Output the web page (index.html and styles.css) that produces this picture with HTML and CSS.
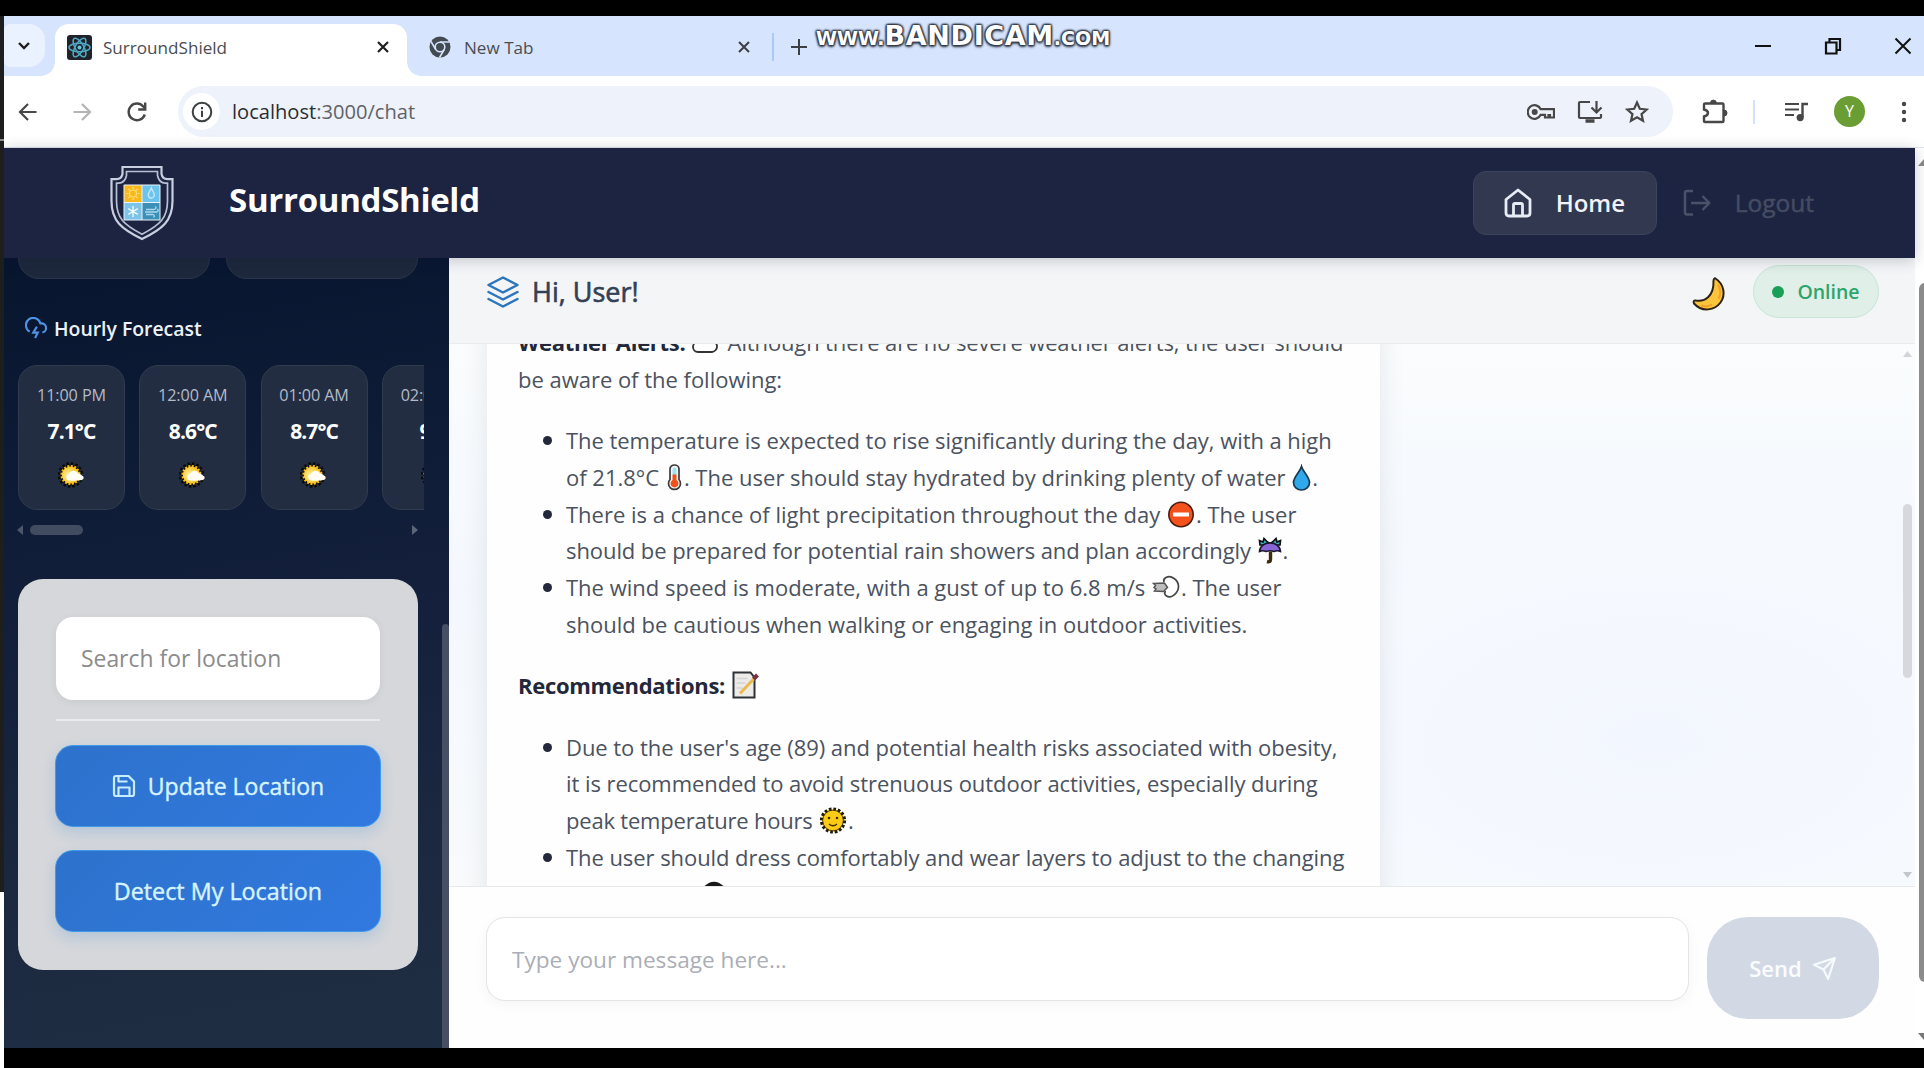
FILE: index.html
```html
<!DOCTYPE html>
<html lang="en">
<head>
<meta charset="utf-8">
<title>SurroundShield</title>
<link rel="stylesheet" href="styles.css">
</head>
<body>
<svg class="defs" width="0" height="0" aria-hidden="true">
  <defs>
    <radialGradient id="sunGlow" cx=".4" cy=".5" r=".6"><stop offset="0" stop-color="#fff3b0"/><stop offset="1" stop-color="#f9bd0c"/></radialGradient>
    <symbol id="sun-cloud" viewBox="0 0 28 26">
      <circle cx="12.5" cy="13" r="10.4" fill="#0b0b0b"/>
      <circle cx="12.5" cy="13" r="11" fill="none" stroke="#0b0b0b" stroke-width="3.6" stroke-dasharray="2.5 1.82"/>
      <circle cx="12.5" cy="13" r="8.9" fill="none" stroke="#f3b90f" stroke-width="2.400" stroke-dasharray="2 1.500"/>
      <circle cx="12.5" cy="13" r="8.6" fill="url(#sunGlow)"/>
      <path d="M11 18.500a3.300 3.300 0 0 1 0-6.500c1-3.200 6-5 9-.8 2 0 2.500 1.600 4 2.200 2.500 1 2 4-.5 4.600-4 1-8 .7-12.500.5z" fill="#fffdf4"/>
    </symbol>
  </defs>
</svg>
<div class="screen">
  <aside class="edge"><i class="edge-line"></i></aside>
  <div class="browser">
    <div class="tabstrip">
      <div class="tab-search"><svg width="14" height="10" viewBox="0 0 14 10"><path d="M2 2l5 5 5-5" fill="none" stroke="#1f1f1f" stroke-width="2.400"/></svg></div>
      <div class="tab tab-active">
        <svg class="favicon" width="25" height="25" viewBox="0 0 25 25"><rect width="25" height="25" rx="3" fill="#20232a"/><g fill="none" stroke="#4fa9c4" stroke-width="1.500"><ellipse cx="12.500" cy="12.500" rx="10.500" ry="4.200"/><ellipse cx="12.500" cy="12.500" rx="10.500" ry="4.200" transform="rotate(60 12.500 12.500)"/><ellipse cx="12.500" cy="12.500" rx="10.500" ry="4.200" transform="rotate(120 12.500 12.500)"/></g><circle cx="12.500" cy="12.500" r="2" fill="#61c5e0"/></svg>
        <span class="tab-title">SurroundShield</span>
        <svg class="tab-close" width="14" height="14" viewBox="0 0 14 14"><path d="M2 2l10 10M12 2L2 12" stroke="#1f1f1f" stroke-width="2.200"/></svg>
      </div>
      <div class="tab tab-idle">
        <svg width="22" height="22" viewBox="0 0 22 22"><circle cx="11" cy="11" r="10.500" fill="#434a52"/><circle cx="11" cy="11" r="5.600" fill="#d6e4fd"/><circle cx="11" cy="11" r="4" fill="#434a52"/><path d="M11 6h9.500M6.700 13.500L2 5.500M15.300 13.500L10.500 21.500" stroke="#d6e4fd" stroke-width="1.500"/></svg>
        <span class="tab-title">New Tab</span>
        <svg class="tab-close" width="14" height="14" viewBox="0 0 14 14"><path d="M2 2l10 10M12 2L2 12" stroke="#3c4043" stroke-width="2"/></svg>
      </div>
      <i class="tab-sep"></i>
      <svg class="new-tab" width="18" height="18" viewBox="0 0 18 18"><path d="M9 1v16M1 9h16" stroke="#3c4043" stroke-width="2"/></svg>
      <div class="window-buttons">
        <svg width="18" height="18" viewBox="0 0 18 18"><path d="M1 9h16" stroke="#111" stroke-width="2"/></svg>
        <svg width="18" height="18" viewBox="0 0 18 18"><path d="M2 5.500h10.500v11H2zM5.500 5V2H16v11h-3" fill="none" stroke="#111" stroke-width="2.200"/></svg>
        <svg width="18" height="18" viewBox="0 0 18 18"><path d="M1.500 1.500l15 15M16.500 1.500l-15 15" stroke="#111" stroke-width="2"/></svg>
      </div>
    </div>
    <div class="toolbar">
      <div class="nav-icons">
        <svg width="20" height="20" viewBox="0 0 20 20"><path d="M18.500 10H2M10 2L2 10l8 8" fill="none" stroke="#474747" stroke-width="2.200"/></svg>
        <svg width="20" height="20" viewBox="0 0 20 20"><path d="M1.500 10H18M10 2l8 8-8 8" fill="none" stroke="#b4b4b4" stroke-width="2.200"/></svg>
        <svg width="22" height="22" viewBox="0 0 22 22"><path d="M18.800 13.500A8.300 8.300 0 1 1 17.500 5.800L19 7.500" fill="none" stroke="#474747" stroke-width="2.400"/><path d="M19.200 1.500v7h-7" fill="none" stroke="#474747" stroke-width="2.400"/></svg>
      </div>
      <div class="omnibox">
        <span class="info"><svg width="22" height="22" viewBox="0 0 22 22"><circle cx="11" cy="11" r="9.300" fill="none" stroke="#3c4043" stroke-width="2"/><path d="M11 9.700V16M11 6v2.200" stroke="#3c4043" stroke-width="2"/></svg></span>
        <span class="url"><b>localhost</b>:3000/chat</span>
        <span class="omni-icons">
          <svg width="28" height="20" viewBox="0 0 28 20"><g fill="none" stroke="#474747" stroke-width="2.200"><path d="M13.700 7.200A6.800 6.800 0 1 0 13.700 12.800H18v2.700h3.500V13H23v2.500h4V7.200z"/></g><circle cx="7.700" cy="10" r="3" fill="#474747"/></svg>
          <svg width="26" height="24" viewBox="0 0 26 24"><path d="M13 2H3q-1 0-1 1v14q0 1 1 1h20q1 0 1-1v-3" fill="none" stroke="#474747" stroke-width="2.200"/><path d="M8.500 21h9" stroke="#474747" stroke-width="3.500"/><path d="M19.500 1v11M14.500 7.500l5 5 5-5" fill="none" stroke="#474747" stroke-width="2.200"/></svg>
          <svg width="24" height="23" viewBox="0 0 24 23"><path d="M12 2.500l2.800 6.300 6.900.7-5.200 4.600 1.500 6.700-6-3.500-6 3.500 1.500-6.700-5.200-4.600 6.900-.7z" fill="none" stroke="#474747" stroke-width="2.200"/></svg>
        </span>
      </div>
      <div class="toolbar-right">
        <svg width="26" height="26" viewBox="0 0 26 26"><path d="M3 4.500h17.500q1 0 1 1V22q0 1-1 1H3q-1 0-1-1v-4.500q4-1 4-3.500t-4-3.500v-5q0-1 1-1z" fill="none" stroke="#474747" stroke-width="2.400"/><path d="M8.500 4a2.900 2.900 0 0 1 5.800 0zM22 11a3 3 0 0 1 0 6z" fill="#474747" stroke="#474747"/></svg>
        <i class="bar-sep"></i>
        <svg width="26" height="22" viewBox="0 0 26 22"><path d="M1 3h14M1 8.500h14M1 14h9" stroke="#474747" stroke-width="2.200"/><path d="M18.500 16V3h5.500" fill="none" stroke="#474747" stroke-width="2.400"/><circle cx="16.200" cy="16.600" r="3.600" fill="#474747"/></svg>
        <span class="avatar">Y</span>
        <svg width="6" height="24" viewBox="0 0 6 24"><g fill="#474747"><circle cx="3" cy="4" r="2.200"/><circle cx="3" cy="12" r="2.200"/><circle cx="3" cy="20" r="2.200"/></g></svg>
      </div>
    </div>
    <div class="viewport">
      <div class="app">
        <header class="app-header">
          <svg class="logo" width="66" height="76" viewBox="0 0 66 76">
            <path d="M13.500 2h39v7q1 5 6 5.200h5V36c0 20-10 28-30.500 38C12.500 64 2.500 56 2.500 36V14.200h5q5-.2 6-5.200z" fill="none" stroke="#c9cfdf" stroke-width="2.200"/>
            <path d="M17.500 6.500h31v4q1.500 7.500 8 7.700h2V36c0 17-7.500 24-25.500 33.200C15 60 7.500 53 7.500 36V18.200h2q6.500-.2 8-7.700z" fill="none" stroke="#b9c0d4" stroke-width="1.700"/>
            <rect x="14.500" y="19.500" width="37" height="36" rx="1" fill="#e8f4fa"/>
            <path d="M15.500 20.500h17v16.500h-17z" fill="#f9b81e"/><path d="M33.500 20.500h17v16.500h-17z" fill="#6cc4ec"/><path d="M15.500 38h17v16.500h-17z" fill="#7ec3e8"/><path d="M33.500 38h17v16.500h-17z" fill="#3c8fb7"/>
            <g fill="none" stroke="#ffe07a" stroke-width="1.200"><circle cx="24" cy="28.500" r="3.500"/><path d="M24 22v2M24 33v2M17.500 28.500h2M28.500 28.500h2M19.500 24l1.300 1.300M27.200 31.700l1.300 1.300M28.500 24l-1.300 1.300M20.800 31.700l-1.300 1.300"/></g>
            <path d="M42.300 23c1 3 3 4.500 3 7a3 3 0 0 1-6 0c0-2.500 2-4 3-7z" fill="none" stroke="#c5e9fb" stroke-width="1.300"/>
            <g stroke="#eefaff" stroke-width="1.400"><path d="M24 41v11M19.200 43.700l9.600 5.600M28.800 43.700l-9.600 5.600"/></g>
            <path d="M37 44.500h8q3-1 1.500-3.200M36 47h12q2-1 .5-3M37 49.500h7q2.500 1 .5 3" fill="none" stroke="#a9d8ee" stroke-width="1.300"/>
          </svg>
          <h1 class="brand">SurroundShield</h1>
          <nav class="main-nav">
            <a class="nav-home"><svg width="30" height="32" viewBox="0 0 30 32"><path d="M3 12.500L15 3l12 9.500V26q0 3-3 3H6q-3 0-3-3zM10.500 29V18q0-1.500 1.500-1.500h6q1.500 0 1.500 1.500v11" fill="none" stroke="#e9ecf5" stroke-width="2.800" stroke-linejoin="round"/></svg><span>Home</span></a>
            <a class="nav-logout"><svg width="28" height="28" viewBox="0 0 28 28"><path d="M10 2H4q-2 0-2 2v19.500q0 2 2 2h6M8 14h18M19.500 7L26.300 14l-6.800 7" fill="none" stroke="#4a5168" stroke-width="2.500" stroke-linejoin="round"/></svg><span>Logout</span></a>
          </nav>
        </header>
        <div class="main">
          <aside class="sidebar">
            <div class="side-content">
              <div class="stats"><div class="stat"></div><div class="stat"></div></div>
              <h2 class="hourly-title"><svg width="22" height="22" viewBox="0 0 24 24"><path d="M19 16.900A5 5 0 0 0 18 7h-1.260a8 8 0 1 0-11.620 9" fill="none" stroke="#4f92e8" stroke-width="2.300"/><path d="M13 10.500l-4 6.500h5l-3 6" fill="none" stroke="#4f92e8" stroke-width="2.300"/></svg><span>Hourly Forecast</span></h2>
              <div class="hours">
                <div class="hour"><span class="time">11:00 PM</span><span class="temp">7.1°C</span><svg width="28" height="26"><use href="#sun-cloud"/></svg></div>
                <div class="hour"><span class="time">12:00 AM</span><span class="temp">8.6°C</span><svg width="28" height="26"><use href="#sun-cloud"/></svg></div>
                <div class="hour"><span class="time">01:00 AM</span><span class="temp">8.7°C</span><svg width="28" height="26"><use href="#sun-cloud"/></svg></div>
                <div class="hour"><span class="time">02:00 AM</span><span class="temp">9°C</span><svg width="28" height="26"><use href="#sun-cloud"/></svg></div>
              </div>
              <div class="h-scroll"><svg width="6" height="10" viewBox="0 0 6 10"><path d="M6 0v10L0 5z" fill="#4d566a"/></svg><i class="h-thumb"></i><svg width="6" height="10" viewBox="0 0 6 10"><path d="M0 0v10l6-5z" fill="#5d6578"/></svg></div>
              <section class="location">
                <div class="loc-input">Search for location</div>
                <i class="divider"></i>
                <button class="loc-btn"><svg width="24" height="24" viewBox="0 0 24 24"><path d="M2 4q0-2 2-2h12.500L22 7.500V20q0 2-2 2H4q-2 0-2-2zM6.500 22v-8.500h11V22M6.500 2v5.500h9" fill="none" stroke="#c5ecff" stroke-width="2.200" stroke-linejoin="round"/></svg><span>Update Location</span></button>
                <button class="loc-btn detect"><span>Detect My Location</span></button>
              </section>
            </div>
            <div class="side-rail"><i></i></div>
          </aside>
          <section class="chat">
            <div class="chat-header">
              <svg width="32" height="32" viewBox="0 0 32 32"><g fill="none" stroke="#2b76bf" stroke-width="2.500" stroke-linejoin="round" stroke-linecap="round"><path d="M16 1.500L30.500 9 16 16.500 1.500 9z"/><path d="M1.500 16L16 23.500 30.500 16"/><path d="M1.500 23L16 30.500 30.500 23"/></g></svg>
              <h2 class="greeting">Hi, User!</h2>
              <svg class="moon" width="36" height="36" viewBox="0 0 36 36"><path d="M24.500 2.500C33 8 35 19 29.500 26.500S11.500 37 3 27.500C2 25.500 3 24 5 24.500 14 26 23 20 22.500 5c0-2 1-3 2-2.500z" fill="#fcc43a" stroke="#2d2417" stroke-width="2"/><path d="M27 8.500c3 5 3 10 .5 14.500M10 29.500q6 2 11-.8" fill="none" stroke="#f2a22c" stroke-width="2"/></svg>
              <span class="online"><i></i>Online</span>
            </div>
            <div class="messages">
              <div class="bubble">
                <p><span class="ln l1"><strong>Weather Alerts:</strong> <svg class="emo" width="26" height="26" viewBox="0 0 26 26"><path d="M6 22a5 5 0 0 1 0-10 7 7 0 0 1 13-1 5.500 5.500 0 0 1 1 11z" fill="#fff" stroke="#333" stroke-width="1.800"/></svg> Although there are no severe weather alerts, the user should</span>
                <span class="ln l2">be aware of the following:</span></p>
                <ul>
                  <li><span class="ln l3">The temperature is expected to rise significantly during the day, with a high</span>
                    <span class="ln l4">of 21.8°C <svg class="emo" width="17" height="27" viewBox="0 0 17 27"><path d="M4 5a4.500 4 0 0 1 9 0v10.500a6 6 0 1 1-9 0z" fill="#f7f7f7" stroke="#3b3b3b" stroke-width="1.700"/><path d="M6.500 5.500a2 2 0 0 1 4 0V11h-4z" fill="#9be3f0"/><path d="M6.500 10.500h4V16a4 4 0 1 1-4 0z" fill="#f1511b"/></svg>. The user should stay hydrated by drinking plenty of water <svg class="emo" width="19" height="27" viewBox="0 0 19 27"><path d="M9.500 2.500C11 8 17.500 13 17.500 18.500a8 7.500 0 0 1-16 0C1.500 13 8 8 9.500 2.500z" fill="#30a9ec" stroke="#173a50" stroke-width="1.700"/></svg>.</span></li>
                  <li><span class="ln l5">There is a chance of light precipitation throughout the day <svg class="emo" width="28" height="27" viewBox="0 0 28 27"><circle cx="14" cy="13.500" r="12.200" fill="#f4511c" stroke="#4a1f12" stroke-width="1.600"/><path d="M6 11.500h16v4H6z" fill="#fff"/></svg>. The user</span>
                    <span class="ln l6">should be prepared for potential rain showers and plan accordingly <svg class="emo" width="24" height="27" viewBox="0 0 24 27"><path d="M2 8L1.500 3.500 5 5l1-3.500L9.500 5l2.500 1.500L14.500 5 18 1.500 19 5l3.500-1.500L22 8z" fill="#3ab5bd" stroke="#0d1114" stroke-width="1.700"/><path d="M1.500 14.500C2 3 22 3 22.500 14.500q-3-1.500-6.500 0-4-1.500-8 0-3.500-1.500-6.500 0z" fill="#8767d6" stroke="#1d1730" stroke-width="1.600"/><path d="M12.500 14.500v8q0 3-3.500 2" fill="none" stroke="#3f2d12" stroke-width="3.400"/></svg>.</span></li>
                  <li><span class="ln l7">The wind speed is moderate, with a gust of up to 6.8 m/s <svg class="emo" width="28" height="27" viewBox="0 0 28 27"><path d="M12 8q-1-3 2-4.500c5-3 12.500 2.500 12.500 9S19 25 14.500 22q-3-2-1-5" fill="#fff" stroke="#444" stroke-width="1.700"/><path d="M1.500 9.500l11-.5 3 4.500-4 4-9-.5 1.500-2-2-1.500 1.500-2z" fill="#bdbdbd" stroke="#555" stroke-width="1.500"/></svg>. The user</span>
                    <span class="ln l8">should be cautious when walking or engaging in outdoor activities.</span></li>
                </ul>
                <p><span class="ln l9"><strong>Recommendations:</strong> <svg class="emo" width="28" height="28" viewBox="0 0 28 28"><path d="M1.500 1.500h17l4 5v20h-21z" fill="#ecebe8" stroke="#2c3236" stroke-width="2"/><path d="M4.500 7.500h11M4.500 12h9M4.500 17h6" stroke="#d4d4d4" stroke-width="1.300"/><path d="M8 22.500L22.500 7" stroke="#eeb84c" stroke-width="3"/><path d="M21.500 8l4-4" stroke="#783040" stroke-width="4"/></svg></span></p>
                <ul>
                  <li><span class="ln l10">Due to the user's age (89) and potential health risks associated with obesity,</span>
                    <span class="ln l11">it is recommended to avoid strenuous outdoor activities, especially during</span>
                    <span class="ln l12">peak temperature hours <svg class="emo" width="28" height="27" viewBox="0 0 28 27"><circle cx="14" cy="13.500" r="11.300" fill="#fbc91b" stroke="#1d1a0a" stroke-width="3.600" stroke-dasharray="2.600 1.840"/><circle cx="14" cy="13.500" r="10.300" fill="#fccb16" stroke="#1d1a0a" stroke-width=".7"/><circle cx="10" cy="11" r="1.300" fill="#40310a"/><circle cx="18" cy="11" r="1.300" fill="#40310a"/><path d="M10 17q4 3.500 8 0" fill="none" stroke="#40310a" stroke-width="1.300"/></svg>.</span></li>
                  <li><span class="ln l13">The user should dress comfortably and wear layers to adjust to the changing</span>
                    <span class="ln l14">temperature <svg class="emo" width="28" height="28" viewBox="0 0 28 28"><path d="M2 7.500Q13 -4 24 7.500V28H2z" fill="#181818"/></svg></span></li>
                </ul>
              </div>
              <div class="chat-rail"><svg width="9" height="6" viewBox="0 0 9 6"><path d="M0 6h9L4.500 0z" fill="#d2d4d7"/></svg><i></i><svg width="9" height="6" viewBox="0 0 9 6"><path d="M0 0h9L4.500 6z" fill="#c4c6ca"/></svg></div>
            </div>
            <div class="composer">
              <div class="msg-input">Type your message here...</div>
              <button class="send"><span>Send</span><svg width="25" height="25" viewBox="0 0 24 24"><path d="M22 2L11 13M22 2l-6.500 20-4.500-9-9-4.500z" fill="none" stroke="#f7fafd" stroke-width="2" stroke-linejoin="round"/></svg></button>
            </div>
          </section>
        </div>
      </div>
      <div class="page-rail"><svg width="12" height="7" viewBox="0 0 12 7"><path d="M0 7h12L6 0z" fill="#8b8b8b"/></svg><i></i><svg width="12" height="7" viewBox="0 0 12 7"><path d="M0 0h12L6 7z" fill="#777"/></svg></div>
    </div>
  </div>
  <div class="watermark"><small>WWW.</small><span class="wm-b">BANDICAM</span><small>.COM</small></div>
</div>
</body>
</html>
```
FILE: styles.css
```css
* { box-sizing: border-box; }
body { margin: 0; background: #000; font-family: "Open Sans", "Noto Sans", sans-serif; }
svg { display: block; flex: none; }
h1, h2, p, ul { margin: 0; padding: 0; font: inherit; }
button { font: inherit; border: 0; margin: 0; padding: 0; }
.defs { position: absolute; }
.screen { position: relative; display: flex; width: 1924px; height: 1068px; padding-top: 16px; overflow: hidden; background: #000; }

/* window behind the browser */
.edge { flex: none; width: 4px; height: 1052px; background: linear-gradient(#1e1e1e 0 876px, #fff 876px); padding-top: 123px; }
.edge-line { display: block; height: 2px; background: #8d8d8d; }

.browser { flex: 1; min-width: 0; height: 1032px; display: flex; flex-direction: column; background: #fff; overflow: hidden; }

.tabstrip { flex: none; height: 60px; background: #d6e4fd; display: flex; align-items: flex-start; padding-top: 8px; }
.tab-search { width: 41px; height: 43px; border-radius: 6px 16px 16px 6px; background: #ebf2ff; display: flex; align-items: center; justify-content: center; padding-right: 1px; }
.tab { display: flex; align-items: center; height: 46px; }
.tab-active { position: relative; width: 352px; height: 52px; margin-left: 10px; padding: 0 17px 6px 12px; background: #fff; border-radius: 14px 14px 0 0; }
.tab-active::before, .tab-active::after { content: ""; position: absolute; bottom: 0; width: 14px; height: 14px; }
.tab-active::before { left: -14px; background: radial-gradient(circle at 0 0, transparent 13.500px, #fff 14px); }
.tab-active::after { right: -14px; background: radial-gradient(circle at 100% 0, transparent 13.500px, #fff 14px); }
.tab-title { margin: 2px 0 0 11px; font-size: 17.100px; line-height: 24px; color: #4a4d51; white-space: nowrap; }
.tab-close { margin-left: auto; }
.tab-idle { width: 348px; padding: 0 4px 0 22px; }
.tab-idle .tab-title { margin-left: 13px; }
.tab-sep { width: 2px; height: 28px; margin: 9px 0 0 17px; background: #a9c9fb; }
.new-tab { margin: 14px 0 0 16px; }
.window-buttons { display: flex; gap: 52px; margin: 13px 12px 0 auto; }

.toolbar { flex: none; height: 72px; display: flex; align-items: center; border-bottom: 1px solid #dfe3ec; }
.nav-icons { display: flex; align-items: center; gap: 34px; padding-left: 14px; }
.omnibox { width: 1495px; height: 51px; margin-left: 30px; border-radius: 26px; background: #eef2fb; display: flex; align-items: center; padding: 0 24px 0 5px; }
.info { width: 37px; height: 37px; border-radius: 50%; background: #fff; display: flex; align-items: center; justify-content: center; }
.url { margin-left: 12px; font-size: 20.100px; color: #5f6368; white-space: nowrap; }
.url b { font-weight: 400; color: #2a2d31; }
.omni-icons { display: flex; align-items: center; gap: 22px; margin-left: auto; }
.toolbar-right { display: flex; align-items: center; margin-left: 29px; }
.bar-sep { width: 2px; height: 24px; margin: 0 29px 0 25px; background: #d3e3fd; }
.avatar { width: 31px; height: 31px; margin: 0 36px 0 24px; border-radius: 50%; background: #6a9e35; color: #fff; font-size: 16px; line-height: 31px; text-align: center; }

.viewport { flex: 1; min-height: 0; display: flex; }
.app { flex: none; width: 1911px; display: flex; flex-direction: column; }
.app-header { position: relative; z-index: 2; flex: none; height: 110px; background: #1c2441; display: flex; align-items: center; padding-left: 105px; box-shadow: 0 2px 14px rgba(20, 25, 50, .22); }
.brand { margin: -7px 0 0 54px; color: #fff; font-size: 33px; font-weight: 700; line-height: 44px; letter-spacing: -.3px; }
.main-nav { display: flex; align-items: center; margin-left: auto; padding-right: 101px; font-size: 24px; font-weight: 600; line-height: 32px; }
.nav-home { width: 184px; height: 64px; border: 1px solid #3c445c; border-radius: 13px; background: #31384f; color: #f1f3f8; display: flex; align-items: center; gap: 23px; padding-left: 29px; }
.nav-logout { display: flex; align-items: center; gap: 24px; margin-left: 26px; color: #454c62; font-weight: 400; font-size: 24.500px; -webkit-text-stroke: .5px #454c62; }

.main { flex: 1; min-height: 0; display: flex; }
.sidebar { flex: none; width: 445px; background: linear-gradient(170deg, #07152f, #15213c 50%, #1f2d42 92%); display: flex; overflow: hidden; }
.side-content { flex: none; width: 421px; padding-left: 14px; }
.stats { display: flex; gap: 16px; width: 400px; }
.stat { flex: 1; height: 21px; background: #1d283c; border: 1px solid #2a3549; border-top: 0; border-radius: 0 0 21px 21px; }
.hourly-title { display: flex; align-items: center; gap: 7px; margin-top: 35px; padding-left: 7px; height: 28px; font-size: 19.400px; font-weight: 600; color: #edf1f8; white-space: nowrap; }
.hours { display: flex; gap: 14.300px; margin-top: 23px; width: 406px; overflow: hidden; }
.hour { flex: none; width: 107px; height: 145px; border: 1px solid #303b4e; border-radius: 19px; background: #222d42; display: flex; flex-direction: column; align-items: center; white-space: nowrap; padding-top: 17px; }
.time { font-size: 16.200px; line-height: 24px; color: #b3bac8; letter-spacing: -.1px; }
.temp { margin: 10px 0 17px; font-size: 21px; line-height: 28px; font-weight: 700; color: #fff; letter-spacing: -.9px; }
.h-scroll { display: flex; align-items: center; width: 400px; height: 10px; margin-top: 15px; }
.h-scroll svg:first-child { margin-left: -1px; }
.h-scroll svg:last-child { margin-left: auto; }
.h-thumb { width: 53px; height: 10px; margin-left: 7px; border-radius: 5px; background: #424c60; }
.location { width: 400px; height: 391px; margin-top: 44px; padding: 38px 37px; border-radius: 25px; background: #d5d7db; }
.loc-input { height: 83px; margin: 0 1px; padding-left: 25px; border-radius: 17px; background: #fff; color: #8b8b8b; font-size: 22.900px; line-height: 84px; box-shadow: 0 2px 8px rgba(0, 0, 0, .06); }
.divider { display: block; height: 2px; margin: 19px 1px 24px; background: #e9eaec; }
.loc-btn { width: 326px; height: 82px; margin-bottom: 23px; padding-bottom: 1px; border: 1px solid #3f9be9; border-radius: 18px; background: linear-gradient(135deg, #2d72cb, #3179e0); color: #d7f3ff; -webkit-text-stroke: .4px #d7f3ff; font-size: 23px; display: flex; align-items: center; justify-content: center; gap: 12px; white-space: nowrap; box-shadow: 0 6px 14px rgba(49, 130, 206, .2); }
.loc-btn.detect { font-size: 23.300px; }
.side-rail { margin-left: auto; width: 7px; padding-top: 366px; }
.side-rail i { display: block; height: 100%; border-radius: 4px 4px 0 0; background: #464f63; }

.chat { flex: 1; min-width: 0; display: flex; flex-direction: column; }
.chat-header { flex: none; height: 86px; background: #f4f5f7; border-bottom: 1px solid #e9ebee; display: flex; align-items: center; padding: 0 36px 18px 38px; }
.greeting { margin: 1px 0 0 13px; font-size: 27px; font-weight: 400; color: #334054; -webkit-text-stroke: .6px #334054; line-height: 36px; white-space: nowrap; }
.moon { margin: 4px 26px 0 auto; }
.online { width: 126px; height: 53px; border: 1px solid #c5e6d6; border-radius: 27px; background: #e0efe8; display: flex; align-items: center; justify-content: center; gap: 13px; color: #2ea56b; font-size: 19.500px; font-weight: 600; }
.online i { width: 12px; height: 12px; border-radius: 50%; background: #1a9f58; }

.messages { flex: 1; min-height: 0; overflow: hidden; display: flex; align-items: flex-start; padding-left: 38px; background: radial-gradient(ellipse 560px 300px at 82% 73%, #f2f6fe, #f6f9fe 60%, transparent), linear-gradient(#fafcfd, #f4f8fe 45%, #f8fafc); }
.bubble { width: 893px; margin-top: -20px; padding: 0 0 40px 31px; background: #fefefe; box-shadow: 0 0 24px rgba(40, 50, 70, .1); color: #4b5260; font-size: 22px; line-height: 36.800px; }
.bubble p, .bubble ul { margin-bottom: 24.500px; }
.bubble ul { list-style: none; padding-left: 48px; }
.bubble li { position: relative; }
.bubble li::before { content: ""; position: absolute; left: -23px; top: 14px; width: 9px; height: 9px; border-radius: 50%; background: #23283a; }
.bubble strong { font-weight: 700; color: #23273a; letter-spacing: -.3px; }
.ln { display: block; height: 36.800px; white-space: nowrap; }
.l1 { letter-spacing: -.13px; }
.l2 { letter-spacing: -.02px; }
.l3, .l10 { letter-spacing: -.05px; }
.l6 { letter-spacing: -.08px; }
.l8 { letter-spacing: .02px; }
.l11, .l13 { letter-spacing: -.065px; }
.l12, .l14 { letter-spacing: -.2px; }
.emo { display: inline-block; vertical-align: -5px; margin: 0 1px; }
.l1 .emo { margin-right: 4px; }
.chat-rail { width: 9px; margin-left: auto; margin-right: 3px; height: 541px; padding: 7px 0 7px; display: flex; flex-direction: column; align-items: center; }
.chat-rail i { width: 9px; height: 174px; margin: 147px 0 auto; border-radius: 5px; background: #d6d8dc; }

.composer { flex: none; height: 162px; background: #fefefe; border-top: 1px solid #e6e8ea; display: flex; align-items: flex-start; padding: 30px 0 0 37px; }
.msg-input { width: 1203px; height: 84px; border: 1px solid #e4e4e6; border-radius: 19px; background: #fff; padding-left: 25px; color: #abaeb6; font-size: 22.600px; line-height: 84px; box-shadow: 0 4px 14px rgba(0, 0, 0, .04); }
.send { width: 172px; height: 102px; margin-left: 18px; border-radius: 41px; background: #d2d9e5; color: #fafcfe; font-size: 22px; font-weight: 600; display: flex; align-items: center; justify-content: center; gap: 10px; }

.page-rail { flex: none; width: 10px; padding: 11px 0 8px; margin-left: -1px; display: flex; flex-direction: column; align-items: flex-end; overflow: hidden; }
.page-rail svg { margin-right: -6px; }
.page-rail i { width: 12px; height: 699px; margin: 117px -7px auto 0; border-radius: 6px; background: #8b8b8b; }

/* recorder overlay floats above the tab strip */
.watermark { position: absolute; left: 816px; top: 22px; display: flex; align-items: baseline; font-family: "DejaVu Sans", sans-serif; font-weight: 700; color: #fff; line-height: 28px; white-space: nowrap; text-shadow: 0 0 2px #333b48, 1px 1px 2px #333b48, -1px -1px 2px #333b48, 1px -1px 2px #333b48, -1px 1px 2px #333b48, 0 2px 3px #56606f; }
.watermark small { font-size: 19px; }
.wm-b { font-size: 27px; letter-spacing: .65px; }
```
